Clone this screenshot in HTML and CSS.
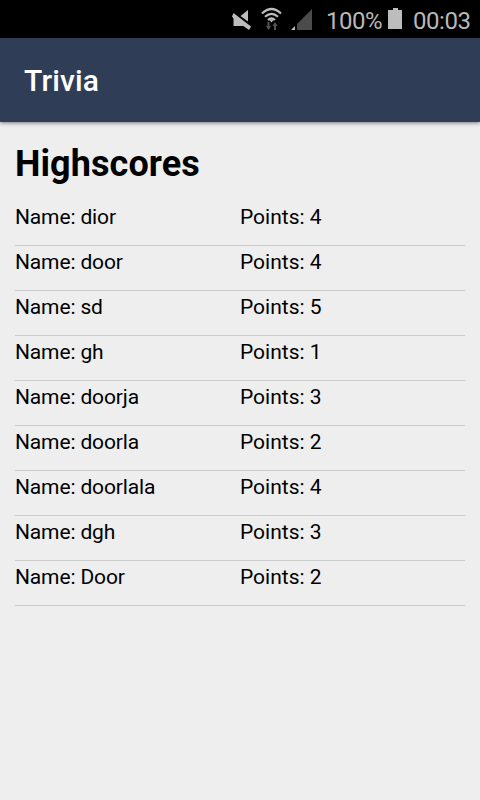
FILE: index.html
```html
<!DOCTYPE html>
<html lang="en">
<head>
<meta charset="utf-8">
<title>Trivia</title>
<link rel="stylesheet" href="styles.css">
</head>
<body>
<div class="status">
  <svg class="icons" width="90" height="38" viewBox="228 0 90 38">
    <path d="M248 10v11.500l-7.500-5.500zM233.500 13l17.500 13.500-2 3.500-5.500-4h-10v-7.500l-1.500-2z" fill="#bdbdbd"/>
    <g fill="none" stroke="#bdbdbd" stroke-width="2.2"><path d="M262 13.500q9.500-9 19 0M265 16.800q6.500-6 13 0M268 20q3.500-3 7 0"/></g>
    <path d="M269.500 20h4l-2 2.500z" fill="#bdbdbd"/>
    <path d="M267.500 22h2v4h1.500l-2.500 4-2.500-4h1.500zM274 30v-4h-1.500l2.500-4 2.500 4h-1.500v4z" fill="#555"/>
    <path d="M297 30h15V9l-15 15z" fill="#4b4b4b"/><path d="M291 30h4v-4z" fill="#bdbdbd"/>
  </svg>
  <span class="percent">100%</span>
  <svg class="battery" width="14" height="38" viewBox="0 0 14 38"><path d="M0 10h5V8h5v2h4v19H0z" fill="#bdbdbd"/></svg>
  <span class="clock">00:03</span>
</div>
<header class="bar">Trivia</header>
<main>
  <h1>Highscores</h1>
  <ul>
    <li><span class="name">Name: dior</span><span>Points: 4</span></li>
    <li><span class="name">Name: door</span><span>Points: 4</span></li>
    <li><span class="name">Name: sd</span><span>Points: 5</span></li>
    <li><span class="name">Name: gh</span><span>Points: 1</span></li>
    <li><span class="name">Name: doorja</span><span>Points: 3</span></li>
    <li><span class="name">Name: doorla</span><span>Points: 2</span></li>
    <li><span class="name">Name: doorlala</span><span>Points: 4</span></li>
    <li><span class="name">Name: dgh</span><span>Points: 3</span></li>
    <li><span class="name">Name: Door</span><span>Points: 2</span></li>
  </ul>
</main>
</body>
</html>
```
FILE: styles.css
```css
body {
  margin: 0;
  min-height: 800px;
  background: #eee;
  color: #000;
  font-family: Roboto, sans-serif;
}
.status {
  display: flex;
  height: 38px;
  padding-left: 228px;
  background: #000;
  color: #b8b8b8;
  font-size: 24px;
  letter-spacing: -.45px;
  line-height: 42px;
  white-space: nowrap;
}
.percent { margin-left: 8px; width: 62px; }
.clock { margin-left: 11px; }
.icons, .battery { flex: none; }
.bar {
  height: 84px;
  padding-left: 24px;
  background: #303d57;
  color: #fff;
  font-size: 30px;
  font-weight: 500;
  letter-spacing: .15px;
  line-height: 85px;
  box-shadow: 0 1px 4px rgba(0, 0, 0, .5);
}
main { padding: 15px 15px 0; }
h1 {
  margin: 0;
  height: 64px;
  font-size: 36px;
  font-weight: 700;
  letter-spacing: .08px;
  line-height: 55px;
}
ul { margin: 0; padding: 0; list-style: none; }
li {
  display: grid;
  grid-template-columns: 1fr 1fr;
  box-sizing: border-box;
  height: 45px;
  border-bottom: 1px solid #cbcbcb;
  font-size: 21px;
  line-height: 32px;
}
.name { letter-spacing: -.14px; }
```
